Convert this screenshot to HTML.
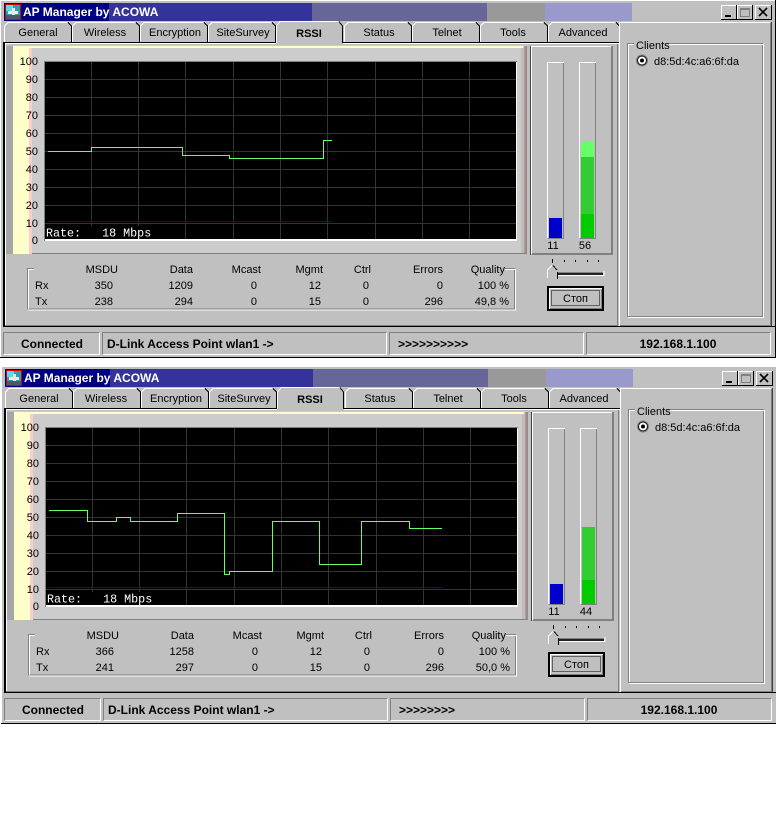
<!DOCTYPE html>
<html><head><meta charset="utf-8"><title>AP Manager by ACOWA</title>
<style>
html,body{margin:0;padding:0;background:#fff;width:776px;height:822px;overflow:hidden}
svg{display:block;position:absolute;left:0;top:0}
text{font-family:"Liberation Sans",sans-serif;font-size:11px;fill:#000}
.r{text-anchor:end}.c{text-anchor:middle}
.b{font-weight:bold;font-size:12px}
.t{font-weight:bold;font-size:12px;fill:#fff}
.m{font-family:"Liberation Mono",monospace;font-size:11.7px;fill:#fff}
path,rect{shape-rendering:crispEdges}
.w{stroke:#fff;fill:none}.d{stroke:#808080;fill:none}.k{stroke:#000;fill:none}
.g{stroke:#333;fill:none}
.tab{fill:#c0c0c0}
</style></head><body>
<svg width="776" height="822" viewBox="0 0 776 822" xmlns="http://www.w3.org/2000/svg">
<defs>
<g id="frame">
<rect x="0" y="0" width="776" height="358" fill="#c0c0c0"/>
<path class="w" d="M0.5 357V0.5H775"/>
<path class="k" d="M0 357.5H776M775.5 0V358"/>
<!-- title -->
<rect x="4" y="3" width="105" height="18" fill="#000080"/>
<rect x="109" y="3" width="203" height="18" fill="#333399"/>
<rect x="312" y="3" width="175" height="18" fill="#666699"/>
<rect x="487" y="3" width="58" height="18" fill="#999999"/>
<rect x="545" y="3" width="87" height="18" fill="#9999cc"/>
<rect x="5" y="4" width="16" height="16" fill="#d00000"/>
<rect x="6" y="5" width="14" height="14" fill="#2f9fb0"/>
<rect x="6" y="5" width="7" height="6" fill="#60d8e8"/>
<rect x="8" y="11" width="10" height="3" fill="#f0f0f0"/>
<rect x="12" y="8" width="3" height="9" fill="#e8e8e8"/>
<rect x="6" y="15" width="14" height="4" fill="#505868"/>
<!-- window buttons -->
<rect x="721" y="5" width="15" height="14" fill="#c0c0c0"/><path class="w" d="M721.5 19V5.5H736"/><path class="k" d="M721 19.5H736.5V5"/><rect x="725" y="15" width="6" height="2" fill="#000"/>
<rect x="737" y="5" width="15" height="14" fill="#c0c0c0"/><path class="w" d="M737.5 19V5.5H752"/><path class="k" d="M737 19.5H752.5V5"/><rect x="740.5" y="8.5" width="9" height="8" fill="none" stroke="#808080"/><path class="d" d="M741 9.5H749"/>
<rect x="755" y="5" width="16" height="14" fill="#c0c0c0"/><path class="w" d="M755.5 19V5.5H771"/><path class="k" d="M755 19.5H771.5V5"/><path d="M759 8L767 16M767 8L759 16" stroke="#000" stroke-width="1.6" fill="none" style="shape-rendering:auto"/>
<!-- tab strip -->
<path class="k" d="M4 42.5H276M343 42.5H619"/><path class="w" d="M4 43.5H276M343 43.5H619"/>
<path class="tab" d="M5 42V26L8 23H68L71 26V42Z"/><path class="w" d="M4.5 42V26L8 22.5H68"/><path class="k" d="M68 22.5L71.5 26V42"/>
<path class="tab" d="M73 42V26L76 23H136L139 26V42Z"/><path class="w" d="M72.5 42V26L76 22.5H136"/><path class="k" d="M136 22.5L139.5 26V42"/>
<path class="tab" d="M141 42V26L144 23H204L207 26V42Z"/><path class="w" d="M140.5 42V26L144 22.5H204"/><path class="k" d="M204 22.5L207.5 26V42"/>
<path class="tab" d="M209 42V26L212 23H272L275 26V42Z"/><path class="w" d="M208.5 42V26L212 22.5H272"/><path class="k" d="M272 22.5L275.5 26V42"/>
<path class="tab" d="M345 42V26L348 23H408L411 26V42Z"/><path class="w" d="M344.5 42V26L348 22.5H408"/><path class="k" d="M408 22.5L411.5 26V42"/>
<path class="tab" d="M413 42V26L416 23H476L479 26V42Z"/><path class="w" d="M412.5 42V26L416 22.5H476"/><path class="k" d="M476 22.5L479.5 26V42"/>
<path class="tab" d="M481 42V26L484 23H544L547 26V42Z"/><path class="w" d="M480.5 42V26L484 22.5H544"/><path class="k" d="M544 22.5L547.5 26V42"/>
<path class="tab" d="M549 42V26L552 23H616L619 26V42Z"/><path class="w" d="M548.5 42V26L552 22.5H616"/><path class="k" d="M616 22.5L619.5 26V42"/>
<!-- tab panel -->
<path class="k" d="M3.5 42V327M4.5 42V327M3 326.5H775"/>
<path class="w" d="M5.5 44V325"/>
<path class="d" d="M5 325.5H618M617.5 44V325"/>
<!-- selected tab -->
<path class="tab" d="M277 46V26L280 23H339L342 26V46Z"/><path class="w" d="M276.5 43V26L280 21.5H339"/><path class="k" d="M339 21.5L342.5 26V43"/>
<!-- graph panel -->
<rect x="6" y="46" width="7" height="208" fill="#a6a6a6"/>
<rect x="13" y="45" width="514" height="209" fill="#cccccc"/>
<rect x="13" y="46" width="16" height="208" fill="#ffffcc"/>
<rect x="29" y="46" width="3" height="208" fill="#ffcccc"/>
<rect x="13" y="46" width="510" height="2" fill="#ffffcc"/>
<rect x="521" y="48" width="3" height="205" fill="#bdbdbd"/>
<rect x="524" y="46" width="1" height="208" fill="#d09090"/>
<rect x="525" y="46" width="2" height="208" fill="#909090"/>
<path class="d" d="M32 253.5H527"/>
<!-- plot -->
<rect x="44" y="61" width="473" height="180" fill="#808080"/>
<rect x="45" y="62" width="472" height="179" fill="#fff"/>
<rect x="45" y="62" width="471" height="177" fill="#000"/>
<path class="g" d="M45 79.5H516M45 97.5H516M45 115.5H516M45 133.5H516M45 151.5H516M45 169.5H516M45 187.5H516M45 205.5H516M45 223.5H516"/>
<path class="g" d="M91.5 62V239M138.5 62V239M185.5 62V239M233.5 62V239M280.5 62V239M327.5 62V239M375.5 62V239M422.5 62V239M469.5 62V239"/>
<!-- left scale -->
<text class="r" x="38" y="65">100</text><text class="r" x="38" y="83">90</text><text class="r" x="38" y="101">80</text><text class="r" x="38" y="119">70</text><text class="r" x="38" y="137">60</text><text class="r" x="38" y="155">50</text><text class="r" x="38" y="173">40</text><text class="r" x="38" y="191">30</text><text class="r" x="38" y="209">20</text><text class="r" x="38" y="227">10</text><text class="r" x="38" y="244">0</text>
<!-- tab labels -->
<text class="c" x="38" y="36">General</text><text class="c" x="105" y="36">Wireless</text><text class="c" x="175" y="36">Encryption</text><text class="c" x="243" y="36">SiteSurvey</text><text class="c" x="309" y="37" style="font-weight:bold">RSSI</text><text class="c" x="379" y="36">Status</text><text class="c" x="447" y="36">Telnet</text><text class="c" x="513" y="36">Tools</text><text class="c" x="583" y="36">Advanced</text>
<!-- meters -->
<path class="w" d="M531.5 254V46.5H611"/><path class="k" d="M530.5 46V255" style="stroke:#444"/>
<path class="d" d="M532 253.5H611.5V46M532 254.5H612.5V46"/>
<path class="w" d="M547.5 238V62.5H564"/><path class="d" d="M548 238.5H563.5V63"/>
<path class="w" d="M579.5 238V62.5H596"/><path class="d" d="M580 238.5H595.5V63"/>
<!-- stats group -->
<path class="d" d="M27.5 309V268.5H34M505 268.5H514.5V309H27"/>
<path class="w" d="M28.5 309V269.5H34M505 269.5H515.5V310H28"/>
<text class="r" x="118" y="273">MSDU</text><text class="r" x="193" y="273">Data</text><text class="r" x="261" y="273">Mcast</text><text class="r" x="323" y="273">Mgmt</text><text class="r" x="371" y="273">Ctrl</text><text class="r" x="443" y="273">Errors</text><text class="r" x="505" y="273">Quality</text>
<text x="35" y="289">Rx</text><text x="35" y="305">Tx</text>
<!-- slider -->
<path class="k" d="M552.5 259V263M564.5 260V262M575.5 260V262M587.5 260V262M598.5 260V262"/>
<path class="d" d="M558 272.500H603"/>
<path class="k" d="M558 273.500H603M558 274.500H603" style="stroke:#222"/>
<path class="w" d="M547.5 278V270L552 265.5M558 275.500H604V271"/>
<path class="k" d="M557.5 272V279M553 265.5L557 270"/>
<!-- button -->
<rect x="547" y="286" width="57" height="25" fill="#000"/>
<rect x="549" y="288" width="53" height="21" fill="#fff"/>
<rect x="550" y="289" width="52" height="20" fill="#808080"/>
<rect x="550" y="289" width="51" height="19" fill="#c0c0c0"/>
<rect x="551.5" y="290.5" width="48" height="15" fill="none" stroke="#000" stroke-dasharray="1 1"/>
<text class="c" x="575.5" y="302">Стоп</text>
<!-- right panel -->
<path class="w" d="M619.5 326V22.5H770"/><path class="d" d="M620 325.5H770.5V23"/><path class="k" d="M771.5 22V326" style="stroke:#404040"/>
<path class="d" d="M627.5 316V43.5H634M668 43.5H762.5V316.500H627"/>
<path class="w" d="M628.5 316V44.5H634M668 44.5H763.5V317.500H628"/>
<text x="636" y="49">Clients</text>
<circle cx="642" cy="60.500" r="5.500" fill="#fff" stroke="#808080"/><circle cx="642" cy="60.500" r="4.500" fill="#fff" stroke="#000"/><circle cx="642" cy="60.500" r="2" fill="#000"/>
<text x="654" y="65">d8:5d:4c:a6:6f:da</text>
<!-- status bar -->
<path class="d" d="M3.500 354V332.500H99M102.500 354V332.500H386M389.500 354V332.500H583M586.500 354V332.500H770"/>
<path class="w" d="M4 354.500H99.500V333M103 354.500H386.500V333M390 354.500H583.500V333M587 354.500H770.500V333"/>
<text class="b c" x="52" y="348">Connected</text>
<text class="b" x="107" y="348">D-Link Access Point wlan1  -&gt;</text>
<text class="b c" x="678" y="348">192.168.1.100</text>
</g>
</defs>

<!-- WINDOW 1 -->
<g>
<use href="#frame"/>
<text class="t" x="23" y="16">AP Manager by ACOWA</text>
<path d="M48 221.500H332" stroke="#0000cc" fill="none"/>
<path d="M48 151.500H91.500V147.500H182.500V155.500H229.500V158.500H323.500V140.500H332" stroke="#66ff66" fill="none"/>
<rect x="45" y="226" width="106" height="13" fill="#000"/>
<text class="m" x="46" y="236.500" xml:space="preserve">Rate:   18 Mbps</text>
<rect x="549" y="218" width="13" height="20" fill="#0000cc"/>
<rect x="581" y="141" width="13" height="16" fill="#66ff66"/>
<rect x="581" y="157" width="13" height="57" fill="#33cc33"/>
<rect x="581" y="214" width="13" height="24" fill="#00cc00"/>
<text class="c" x="553" y="249">11</text><text class="c" x="585" y="249">56</text>
<text class="r" x="113" y="289">350</text><text class="r" x="193" y="289">1209</text><text class="r" x="257" y="289">0</text><text class="r" x="321" y="289">12</text><text class="r" x="369" y="289">0</text><text class="r" x="443" y="289">0</text><text class="r" x="509" y="289">100 %</text>
<text class="r" x="113" y="305">238</text><text class="r" x="193" y="305">294</text><text class="r" x="257" y="305">0</text><text class="r" x="321" y="305">15</text><text class="r" x="369" y="305">0</text><text class="r" x="443" y="305">296</text><text class="r" x="509" y="305">49,8 %</text>
<text class="b" x="398" y="348">&gt;&gt;&gt;&gt;&gt;&gt;&gt;&gt;&gt;&gt;</text>
</g>

<!-- WINDOW 2 -->
<g transform="translate(1,366)">
<use href="#frame"/>
<text class="t" x="23" y="16">AP Manager by ACOWA</text>
<path d="M48 221.500H441" stroke="#0000cc" fill="none"/>
<path d="M48 144.500H86.500V155.500H115.500V151.500H129.500V155.500H176.500V147.500H223.500V208.500H228.500V205.500H271.500V155.500H318.500V198.500H360.500V155.500H408.500V162.500H441" stroke="#66ff66" fill="none"/>
<rect x="45" y="226" width="106" height="13" fill="#000"/>
<text class="m" x="46" y="236.500" xml:space="preserve">Rate:   18 Mbps</text>
<rect x="549" y="218" width="13" height="20" fill="#0000cc"/>
<rect x="581" y="161" width="13" height="16" fill="#33cc33"/>
<rect x="581" y="177" width="13" height="37" fill="#33cc33"/>
<rect x="581" y="214" width="13" height="24" fill="#00cc00"/>
<text class="c" x="553" y="249">11</text><text class="c" x="585" y="249">44</text>
<text class="r" x="113" y="289">366</text><text class="r" x="193" y="289">1258</text><text class="r" x="257" y="289">0</text><text class="r" x="321" y="289">12</text><text class="r" x="369" y="289">0</text><text class="r" x="443" y="289">0</text><text class="r" x="509" y="289">100 %</text>
<text class="r" x="113" y="305">241</text><text class="r" x="193" y="305">297</text><text class="r" x="257" y="305">0</text><text class="r" x="321" y="305">15</text><text class="r" x="369" y="305">0</text><text class="r" x="443" y="305">296</text><text class="r" x="509" y="305">50,0 %</text>
<text class="b" x="398" y="348">&gt;&gt;&gt;&gt;&gt;&gt;&gt;&gt;</text>
</g>
</svg>
</body></html>
